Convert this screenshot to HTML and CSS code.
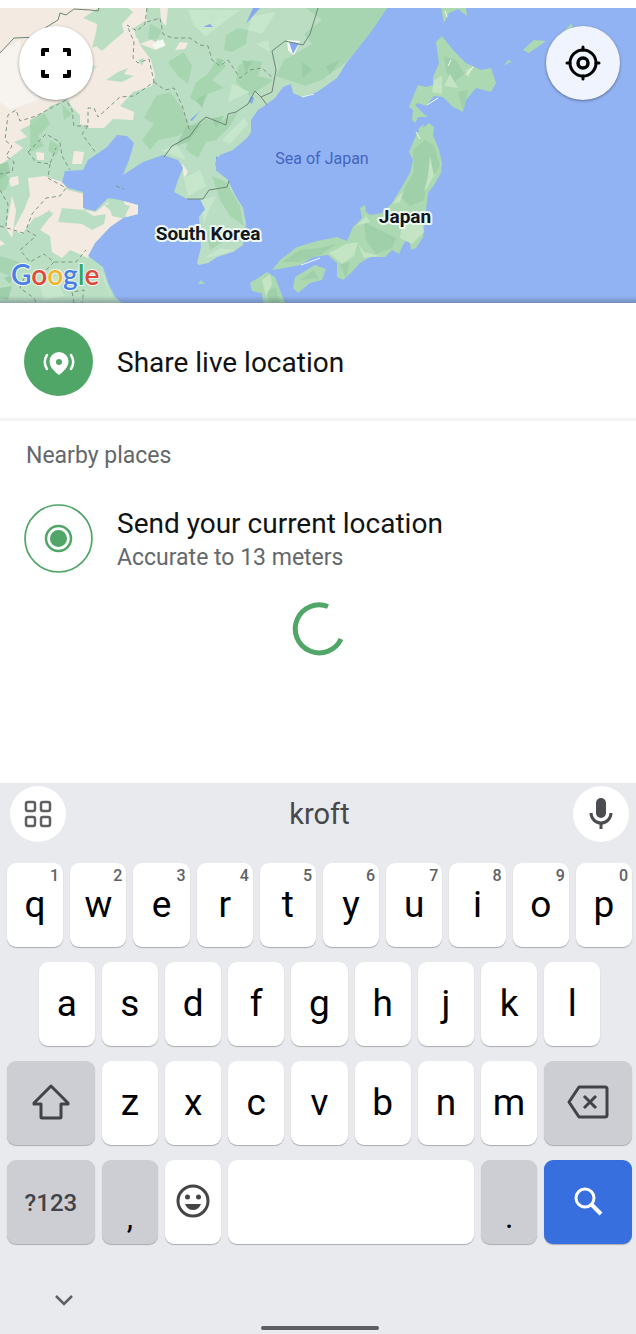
FILE: index.html
```html
<!DOCTYPE html>
<html lang="en">
<head>
<meta charset="utf-8">
<meta name="viewport" content="width=device-width, initial-scale=1">
<title>Send location</title>
<link rel="stylesheet" href="styles.css">
</head>
<body>

<div class="map">
<svg class="tiles" viewBox="0 8 636 295" preserveAspectRatio="xMidYMid slice">
<defs>
<clipPath id="mainland">
<path d="M387 8L370 33L347 62L337 78L317 92L302 97L293 93L291 84L283 87L275 98L267 104L258 110L251 120L251 132L248 137L233 150L220 155L215 163L217 171L228 180L235 195L243 208L246 223L243 245L233 252L217 257L208 263L199 265L197 263L201 247L200 230L199 217L205 209L200 199L187 199L174 192L178 180L183 168L178 160L163 155L143 162L123 175L129 160L134 143L127 136L117 135L107 147L88 160L83 170L65 171L62 182L68 188L83 192L83 208L95 211L108 198L120 200L138 205L138 214L123 218L110 227L95 243L88 256L103 267L108 283L115 297L122 303L0 303L0 8Z"/>
</clipPath>
<linearGradient id="edge" x1="0" y1="0" x2="0" y2="1">
<stop offset="0" stop-color="#456" stop-opacity="0"/>
<stop offset="1" stop-color="#456" stop-opacity=".4"/>
</linearGradient>
</defs>

<g clip-path="url(#mainland)">
<path fill="#bbdfc3" d="M0 8H400V303H0Z"/>
<!-- dry land -->
<path fill="#f3ebe2" d="M0 8H98L83 18L97 24L95 45L102 51L112 42L124 32L122 24L133 12L128 8H146L147 25L136 33L140 45L151 60L155 75L152 86L133 92L120 106L134 112L133 120L113 119L104 128L90 128L80 124L80 115L72 107L68 99L50 106L36 122L20 130L27 137L14 142L23 148L10 158L0 165Z"/>
<path fill="#f7f4ef" d="M0 52L20 40L24 80L40 99L10 110L0 102Z"/>
<path fill="#f3ebe2" d="M28 178L45 176L62 182L68 190L84 194L84 210L96 212L108 202L112 216L126 219L110 230L88 258L70 250L62 258L52 252L50 236L40 230L54 212L34 218L22 234L13 230L24 210L30 195ZM8 178L18 176L19 184L11 187ZM12 196L16 210L12 238L6 228ZM74 151L84 152L82 164L72 164ZM36 152L44 153L44 160L37 160ZM124 200L140 204L140 216L126 218ZM160 8L168 8L166 26L161 20ZM175 50L180 42L188 43L185 49ZM0 240L5 244L0 246ZM155 38L166 44L156 50L140 44ZM134 142L126 166L120 163L126 155ZM182 163L188 172L184 178Z"/>
<path fill="#f3faf1" d="M163 39L165 46L157 49L152 45ZM287 40L300 41L294 56L288 50Z"/>
<!-- green inside the dry land -->
<path fill="#bbdfc3" d="M100 26L112 22L114 36L106 42L92 48L96 32ZM106 80L118 72L128 68L124 74L134 76L122 82ZM20 50L36 48L48 53L30 56ZM134 28L146 20L148 36L136 38ZM138 60L144 58L142 66ZM40 216L50 210L52 216L34 226ZM62 208L84 210L94 216L106 214L104 224L92 230L82 224L58 222ZM104 205L116 202L130 206L126 214L112 212Z"/>
<!-- forest -->
<g fill="#a4d4ae" opacity=".85">
<path d="M306 8L387 8L372 34L346 62L322 80L305 86L276 76L284 60L312 44L304 34L322 20Z"/>
<path d="M226 35L238 28L248 30L246 44L232 52L224 50ZM238 66L250 60L262 62L258 76L274 80L250 96L236 82Z"/>
<path d="M216 60L226 66L212 80L224 88L208 94L202 106L190 98L196 82L208 74Z"/>
<path d="M144 118L156 96L170 92L182 108L190 126L178 136L158 140L150 150L142 140L154 124Z"/>
<path d="M190 126L204 118L218 122L238 112L230 126L216 140L206 142L198 158L186 150ZM212 176L226 182L240 206L244 226L230 216L220 200Z"/>
<path d="M168 62L184 52L192 66L188 84L178 76ZM150 24L162 30L156 42L148 38ZM205 12L220 14L212 22Z"/>
<path d="M30 120L44 112L50 124L38 136L44 146L30 152ZM0 170L10 178L6 190L0 192ZM0 256L20 262L10 276L0 272ZM62 104L72 114L64 120ZM50 140L60 146L56 156L48 150ZM206 232L220 226L226 240L210 250Z"/>
</g>
<g fill="#98cba4" opacity=".8">
<path d="M326 66L340 60L330 74ZM186 126L202 124L188 142L176 146ZM302 62L312 70L302 78ZM212 118L224 116L216 128ZM196 100L206 94L202 108ZM242 60L252 62L246 72Z"/>
<path d="M0 164L8 162L10 172L0 180ZM0 288L12 286L8 300L0 298ZM4 278L14 274L10 284ZM216 58L224 60L220 66Z"/>
</g>
<g fill="#cae8ce" opacity=".8">
<path d="M188 10L240 10L206 36L194 26ZM252 16L276 12L262 34L248 30ZM232 84L250 92L228 102ZM160 150L178 146L186 160ZM184 178L200 170L206 186L188 196ZM200 200L216 196L208 212L204 224ZM204 258L220 248L236 250L216 256ZM100 270L92 262L104 274L112 300ZM256 44L268 40L270 52ZM222 140L244 118L248 124L230 144ZM40 284L56 276L64 296L44 300ZM84 64L98 66L92 72Z"/>
</g>
<!-- lakes and inlets -->
<path fill="#87a8ee" d="M253 8L260 8L246 24ZM205 26L210 24L213 27L204 27ZM190 120L200 111L192 121ZM289 42L299 43L293 54ZM216 156L222 160L216 172ZM200 204L205 210L200 214ZM251 96L254 98L252 104L249 102Z"/>
</g>

<!-- islands -->
<g fill="#acd8b2">
<path d="M417 133L423 128L429 123L434 127L433 135L439 150L442 163L441 173L434 185L428 193L426 210L423 237L416 248L411 250L410 243L406 240L402 247L399 254L392 250L385 257L370 257L360 263L352 272L343 280L337 277L337 263L328 255L313 257L300 265L285 268L272 270L280 260L297 247L317 241L337 237L347 241L353 227L362 218L360 208L365 205L366 212L370 215L382 213L392 203L400 190L410 173L413 160L409 152Z"/>
<path d="M442 36L453 50L466 63L481 70L491 68L496 83L491 92L476 88L466 100L463 112L453 107L443 97L434 96L426 106L418 103L415 105L424 114L428 117L418 117L415 123L412 120L413 110L409 107L413 97L418 85L426 87L433 85L433 77L439 63L436 42Z"/>
<path d="M250 283L267 272L275 277L280 290L285 303H263L262 293L252 291ZM295 277L315 265L326 269L322 280L310 283L298 293L293 288ZM441 8L444 23L449 13L458 9L467 16L466 8ZM523 50L534 40L546 41L529 53ZM504 66L508 60L512 61ZM562 33L571 24L573 26L566 34ZM198 284L201 280L205 284ZM418 129L424 124L422 134Z"/>
</g>
<g fill="#9fd0a9">
<path d="M413 150L425 140L434 146L440 166L426 186L424 200L410 206L400 196L414 172ZM364 222L384 232L396 238L392 248L376 254L366 240ZM282 262L300 250L320 248L336 244L322 254L300 262ZM444 56L456 60L464 74L452 84L446 70ZM340 264L350 262L346 278ZM300 280L314 270L318 278Z"/>
<path d="M458 92L468 90L463 110ZM266 290L276 288L280 302L270 303Z"/>
</g>
<g fill="#c3e5c4">
<path d="M329 253L346 244L358 242L354 256L342 264ZM358 244L364 252L380 256L364 258ZM402 224L420 214L424 232L412 244L400 238ZM430 156L434 176L424 192L428 176ZM392 204L404 190L400 202ZM450 74L458 88L444 86ZM466 70L474 66L468 78ZM356 226L366 216L370 222ZM262 280L270 274L272 284L266 296ZM434 80L442 76L442 94L432 92Z"/>
</g>
<path class="snow" d="M427 105L438 98M416 132L420 139M302 97L314 94M466 75L473 67M448 66L451 60M301 265L320 258M447 17L445 11"/>

<!-- borders -->
<path class="border" d="M0 53L14 38L40 37L45 28L58 20L60 13L66 15L74 9L90 10L98 11L99 8M318 8L310 34L303 45L285 41L272 51L276 70L272 92L261 97L255 91L248 104L236 112L228 114L226 125L206 117L200 122L190 136L172 146L164 157M261 97L267 105M187 199L203 199L209 190L227 187L229 181"/>
<path class="border dash" d="M147 8L145 24L137 31L127 25L134 42L133 58L138 63L149 59L154 82L134 96L120 97L98 117L94 108L88 108L88 126L82 134L96 153M147 22L160 18L163 34L172 38L190 38L200 45L208 46L212 60L220 66L228 60L240 78L250 70L262 68L275 80M154 82L165 90L174 88L182 105L190 132M88 126L74 126L72 110L66 100L36 116L20 121L16 110L8 115L5 140L12 146L6 156L14 162L12 172L0 174M28 152L46 134L60 142L62 156L70 170M28 152L36 162L50 164L56 148M50 164L48 178L66 188L60 196L46 198L32 214L26 230L36 236L20 250L30 262L44 254L54 262L76 262L86 250M0 226L14 230L26 234M0 190L8 204L6 226M54 262L46 270L24 278L20 288L34 298L36 303M74 303L72 292L84 290L82 303M116 186L124 189"/>

<path fill="url(#edge)" d="M0 296H636V303H0Z"/>

<text class="sea" x="322" y="164">Sea of Japan</text>
<text class="country" x="208" y="240">South Korea</text>
<text class="country" x="405" y="223">Japan</text>
<text class="google" x="11" y="285"><tspan fill="#4a7fe8">G</tspan><tspan fill="#e0483c">o</tspan><tspan fill="#f3b52c">o</tspan><tspan fill="#4a7fe8">g</tspan><tspan fill="#3aa757">l</tspan><tspan fill="#e0483c">e</tspan></text>
</svg>
<button class="round full" aria-label="Full screen">
<svg width="32" height="32" viewBox="0 0 32 32" fill="none" stroke="#000" stroke-width="4" stroke-linejoin="round">
<path d="M3 9V3H9M23 3H29V9M29 23V29H23M9 29H3V23"/>
</svg>
</button>
<button class="round locate" aria-label="My location">
<svg width="36" height="36" viewBox="0 0 36 36" fill="none" stroke="#000">
<circle cx="18" cy="18" r="13" stroke-width="3"/>
<circle cx="18" cy="18" r="5" stroke-width="3.500"/>
<path stroke-width="3" stroke-linecap="round" d="M18 2V5M18 31V34M2 18H5M31 18H34"/>
</svg>
</button>
</div>

<div class="places">
<button class="place live">
<svg class="badge" viewBox="0 0 69 69">
<circle cx="34.500" cy="34.500" r="34.500" fill="#4fa667"/>
<path fill="#fff" fill-rule="evenodd" d="M35 48C31 45 25.500 40 25.500 34.500A9.500 9.500 0 0 1 44.500 34.500C44.500 40 39 45 35 48ZM35 32A3 3 0 1 0 35 38A3 3 0 1 0 35 32Z"/>
<path fill="none" stroke="#fff" stroke-width="2.500" stroke-linecap="round" d="M23 28Q18.500 35 23 42M47 28Q51.500 35 47 42"/>
</svg>
<span class="text">
<span class="name">Share live location</span>
</span>
</button>

<h2>Nearby places</h2>

<button class="place">
<svg class="badge" viewBox="0 0 69 69">
<circle cx="34.500" cy="34.500" r="33.500" fill="none" stroke="#4fa667" stroke-width="1.700"/>
<circle cx="34.500" cy="34.500" r="12.500" fill="none" stroke="#4fa667" stroke-width="2.500"/>
<circle cx="34.500" cy="34.500" r="8.500" fill="#4fa667"/>
</svg>
<span class="text">
<span class="name">Send your current location</span>
<span class="note">Accurate to 13 meters</span>
</span>
</button>

<svg class="spinner" viewBox="0 0 54 54" role="img" aria-label="Loading">
<path fill="none" stroke="#4fa667" stroke-width="5" d="M37 4.500A24 24 0 1 0 50 37"/>
</svg>
</div>

<div class="keyboard">
<div class="suggest">
<button class="tool" aria-label="Keyboard menu">
<svg width="28" height="28" viewBox="0 0 28 28" fill="none" stroke="#5f6063" stroke-width="2.500">
<rect x="2" y="2" width="9" height="9" rx="2"/>
<rect x="17" y="2" width="9" height="9" rx="2"/>
<rect x="2" y="17" width="9" height="9" rx="2"/>
<rect x="17" y="17" width="9" height="9" rx="2"/>
</svg>
</button>
<button class="word">kroft</button>
<button class="tool" aria-label="Voice typing">
<svg width="24" height="34" viewBox="0 0 24 34">
<rect x="7" y="1" width="10" height="20" rx="5" fill="#4b4c4f"/>
<path fill="none" stroke="#4b4c4f" stroke-width="3" d="M2 16A10 10 0 0 0 22 16M12 26V32"/>
</svg>
</button>
</div>

<div class="keys">
<button class="key">q<sup>1</sup></button>
<button class="key">w<sup>2</sup></button>
<button class="key">e<sup>3</sup></button>
<button class="key">r<sup>4</sup></button>
<button class="key">t<sup>5</sup></button>
<button class="key">y<sup>6</sup></button>
<button class="key">u<sup>7</sup></button>
<button class="key">i<sup>8</sup></button>
<button class="key">o<sup>9</sup></button>
<button class="key">p<sup>0</sup></button>

<button class="key indent">a</button>
<button class="key">s</button>
<button class="key">d</button>
<button class="key">f</button>
<button class="key">g</button>
<button class="key">h</button>
<button class="key">j</button>
<button class="key">k</button>
<button class="key">l</button>

<button class="key wide gray" aria-label="Shift">
<svg width="38" height="36" viewBox="0 0 38 36" fill="none" stroke="#424347" stroke-width="3" stroke-linejoin="round">
<path d="M19 2L36 19V20H29V33Q29 34 28 34H10Q9 34 9 33V20H2V19Z"/>
</svg>
</button>
<button class="key">z</button>
<button class="key">x</button>
<button class="key">c</button>
<button class="key">v</button>
<button class="key">b</button>
<button class="key">n</button>
<button class="key">m</button>
<button class="key wide gray" aria-label="Delete">
<svg width="42" height="34" viewBox="0 0 42 34" fill="none" stroke="#424347" stroke-width="3" stroke-linejoin="round">
<path d="M12 2H38Q40 2 40 4V30Q40 32 38 32H12L2 17ZM17 11L29 23M29 11L17 23"/>
</svg>
</button>

<button class="key wide gray symbols">?123</button>
<button class="key gray low">,</button>
<button class="key" aria-label="Emoji">
<svg width="34" height="34" viewBox="0 0 34 34">
<circle cx="17" cy="17" r="15" fill="none" stroke="#444547" stroke-width="3"/>
<circle cx="11.500" cy="13" r="2.500" fill="#444547"/>
<circle cx="22.500" cy="13" r="2.500" fill="#444547"/>
<path fill="#444547" d="M9 20H25Q22.500 26 17 26Q11.500 26 9 20Z"/>
</svg>
</button>
<button class="key space" aria-label="Space"></button>
<button class="key gray low">.</button>
<button class="key wide search" aria-label="Search">
<svg width="30" height="30" viewBox="0 0 30 30" fill="none" stroke="#fff">
<circle cx="12" cy="12" r="9" stroke-width="3"/>
<path stroke-width="4" d="M18 18L28 28"/>
</svg>
</button>
</div>

<div class="nav">
<button class="hide" aria-label="Hide keyboard">
<svg width="18" height="12" viewBox="0 0 18 12" fill="none" stroke="#5f6063" stroke-width="2.500">
<path d="M1 2L9 10L17 2"/>
</svg>
</button>
<div class="home"></div>
</div>
</div>

</body>
</html>
```
FILE: styles.css
```css
body {
	display: flex;
	flex-direction: column;
	box-sizing: border-box;
	min-height: 100vh;
	margin: 0;
	padding-top: 8px;
	background: #fff;
	color: #111314;
	font-family: Roboto, sans-serif;
}
button {
	margin: 0;
	padding: 0;
	border: 0;
	background: none;
	color: inherit;
	font-family: inherit;
}
svg {
	display: block;
}

/* map */
.map {
	position: relative;
	height: 295px;
	background: #92b3f3;
}
.tiles {
	width: 100%;
	height: 100%;
}
.border {
	fill: none;
	stroke: #6d8577;
	stroke-width: 1;
}
.dash {
	stroke: #7f9686;
	stroke-dasharray: 4 3;
}
.snow {
	fill: none;
	stroke: #f0faee;
	stroke-width: 1;
}
.sea {
	fill: #4464bd;
	font-size: 16px;
	text-anchor: middle;
}
.country, .google {
	paint-order: stroke;
	stroke: #eef7f0;
	stroke-width: 4;
	stroke-linejoin: round;
}
.country {
	fill: #111722;
	font-size: 19px;
	font-weight: 700;
	text-anchor: middle;
}
.google {
	font-family: Lato, sans-serif;
	font-size: 28px;
	font-weight: 600;
	stroke-width: 2;
}
.round {
	position: absolute;
	top: 18px;
	display: flex;
	align-items: center;
	justify-content: center;
	width: 74px;
	height: 74px;
	border-radius: 50%;
	background: #fff;
	box-shadow: 0 1px 3px rgba(0, 0, 0, 0.4);
}
.full {
	left: 19px;
}
.locate {
	right: 16px;
	background: #f0f4fe;
}

/* places list */
.places {
	flex: 1;
}
.place {
	display: flex;
	align-items: center;
	gap: 24px;
	width: 100%;
	padding: 0 24px;
	text-align: left;
}
.live {
	padding: 24px 24px 22px;
	border-bottom: 3px solid #f3f3f4;
}
.badge {
	flex: none;
	width: 69px;
	height: 69px;
}
.text {
	padding-top: 3px;
}
.name, .note {
	display: block;
}
.name {
	font-size: 28px;
	line-height: 36px;
}
.note, h2 {
	color: #64686b;
	font-size: 23px;
	font-weight: 400;
	line-height: 32px;
}
h2 {
	margin: 19px 26px 31px;
}
.spinner {
	width: 54px;
	height: 54px;
	margin: 28px auto;
}

/* keyboard */
.keyboard {
	background: #e8eaed;
}
.suggest {
	display: flex;
	align-items: center;
	justify-content: space-between;
	padding: 3px 7px 21px 10px;
}
.tool {
	display: flex;
	align-items: center;
	justify-content: center;
	width: 56px;
	height: 56px;
	border-radius: 50%;
	background: #fff;
}
.word {
	color: #46484b;
	font-size: 29px;
}
.keys {
	display: grid;
	grid-template-columns: repeat(20, 1fr);
	grid-auto-rows: 84px;
	gap: 15px 7px;
	padding: 0 4px 0 7px;
}
.key {
	position: relative;
	display: flex;
	grid-column: span 2;
	align-items: center;
	justify-content: center;
	padding-bottom: 2px;
	border-radius: 9px;
	background: #fff;
	box-shadow: 0 1px 1px #a9abb0;
	color: #000;
	font-size: 37px;
}
.key sup {
	position: absolute;
	top: 3px;
	right: 4px;
	color: #606164;
	font-size: 16px;
	font-weight: 500;
	line-height: 20px;
}
.indent {
	grid-column: 2 / span 2;
}
.wide {
	grid-column: span 3;
}
.space {
	grid-column: span 8;
}
.gray {
	background: #cdced4;
}
.symbols {
	padding: 2px 0 0;
	color: #424347;
	font-size: 24px;
	font-weight: 500;
}
.low {
	align-items: flex-end;
	padding-bottom: 8px;
	font-size: 32px;
}
.search {
	background: #376fdf;
}
.nav {
	padding: 44px 0 4px 4px;
}
.hide {
	display: block;
	margin-left: 51px;
	padding: 6px 0;
}
.home {
	width: 118px;
	height: 4px;
	margin: 14px auto 0;
	border-radius: 2px;
	background: #5c5d60;
}
```
